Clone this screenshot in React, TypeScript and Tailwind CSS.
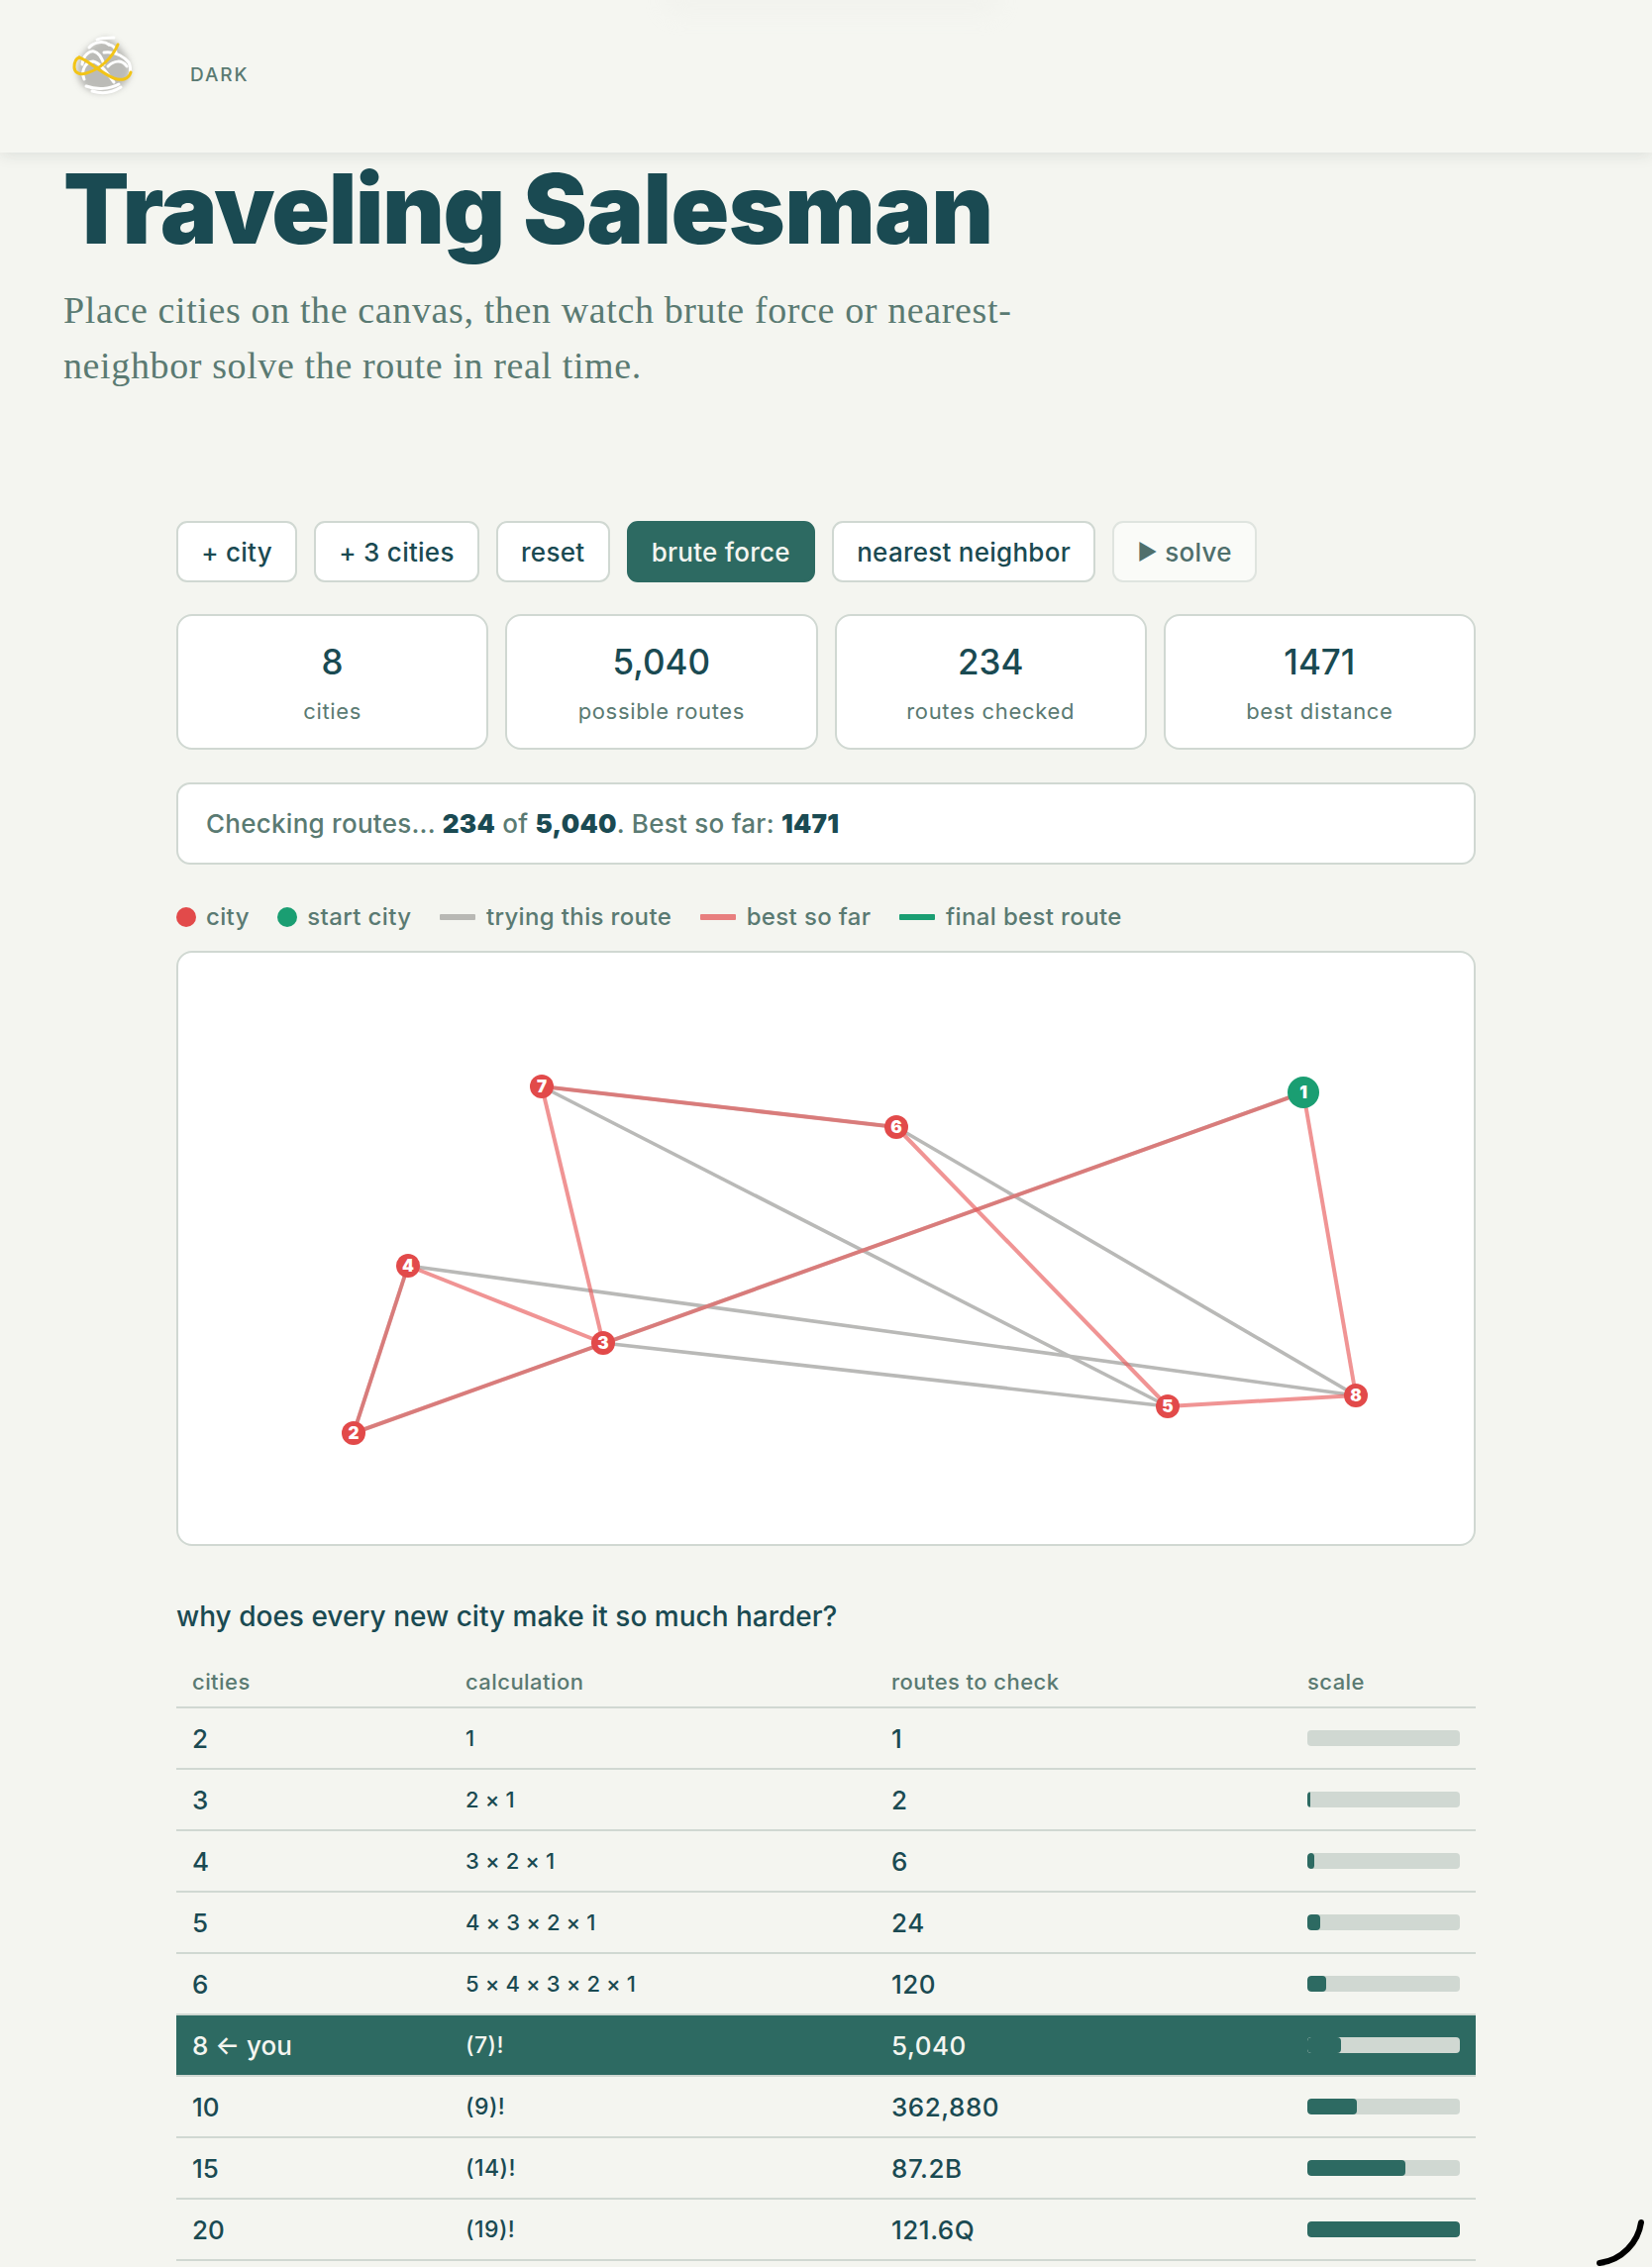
import React from "react";

const nodes: Record<number, [number, number]> = {
  1: [1316, 1103], 2: [357, 1447], 3: [609, 1356], 4: [412, 1278],
  5: [1179, 1420], 6: [905, 1138], 7: [547, 1097], 8: [1369, 1409],
};
const gray = [[4, 8], [8, 6], [6, 7], [7, 5], [5, 3], [1, 2], [2, 4]];
const red = [[1, 8], [8, 5], [5, 6], [6, 7], [7, 3], [3, 4], [4, 2], [2, 1]];
const OX = 178, OY = 960;

function Logo() {
  return (
    <svg width="80" height="80" viewBox="0 0 80 80" fill="none" strokeLinecap="round">
      <defs>
        <filter id="cone-blur" x="-40%" y="-40%" width="180%" height="180%">
          <feGaussianBlur stdDeviation="3" />
        </filter>
      </defs>
      <path d="M42 13C54 16 67 34 67 46C67 60 52 69 38 69C22 69 11 58 13 42C15 30 28 17 42 13Z" fill="#a8a8a4" opacity="0.75" filter="url(#cone-blur)" />
      <g stroke="#ffffff" strokeWidth="3">
        <path d="M33 15C37 13 42 13 50 13" />
        <path d="M25 23C30 17 40 16 45 20" />
        <path d="M45 20C50 21 52 24 52 28" />
        <path d="M18 40C19 30 26 26 30 27C35 28 38 34 40 40" />
        <path d="M20 55C16 46 22 37 29 37C36 38 44 50 50 58" />
        <path d="M40 28C52 26 62 34 65 38C67 42 67 46 66 50" />
        <path d="M44 42C50 36 58 35 63 42" />
        <path d="M22 62C33 66 46 65 55 60" />
        <path d="M28 67C38 70 48 69 57 63" />
      </g>
      <g stroke="#f2c417" strokeWidth="3">
        <path d="M54 20C48 34 36 45 22 49C15 51 10 48 10 43C10 38 12 34 15 33" />
        <path d="M15 33C24 36 36 48 50 54C58 57 65 55 67 48" />
      </g>
    </svg>
  );
}

function Btn({ children, active, muted }: { children: React.ReactNode; active?: boolean; muted?: boolean }) {
  const cls = active
    ? "bg-[#2d6a62] border-[#2d6a62] text-[#f4f5f0]"
    : muted
      ? "bg-[#fafbf8] border-[#dfe4df] text-[#4f6f6c]"
      : "bg-white border-[#d0d8d2] text-[#1a4a52]";
  return (
    <button className={`h-[62px] px-[23.2px] rounded-[11px] border-2 text-[26px] font-medium tracking-[0.01em] whitespace-nowrap ${cls}`}>
      {children}
    </button>
  );
}

function Stat({ value, label }: { value: string; label: string }) {
  return (
    <div className="h-[137px] bg-white border-2 border-[#d0d8d2] rounded-[16px] flex flex-col items-center justify-center gap-[15px] pt-[2px]">
      <div className="text-[35px] leading-[42px] font-medium text-[#1a4a52]">{value}</div>
      <div className="text-[22px] leading-[28px] tracking-[0.03em] text-[#5a7a72]">{label}</div>
    </div>
  );
}

function Legend({ kind, color, label }: { kind: "dot" | "line"; color: string; label: string }) {
  return (
    <div className="flex items-center gap-[10px]">
      {kind === "dot" ? (
        <span className="w-[20px] h-[20px] rounded-full" style={{ backgroundColor: color }} />
      ) : (
        <span className="w-[36px] h-[6px] rounded-[1px] mr-[1px]" style={{ backgroundColor: color }} />
      )}
      <span className="text-[24px] font-medium tracking-[0.015em] text-[#5a7a72]">{label}</span>
    </div>
  );
}

const rows: [string, string, string, number][] = [
  ["2", "1", "1", 0],
  ["3", "2 × 1", "2", 3],
  ["4", "3 × 2 × 1", "6", 7],
  ["5", "4 × 3 × 2 × 1", "24", 13],
  ["6", "5 × 4 × 3 × 2 × 1", "120", 19],
  ["8 ← you", "(7)!", "5,040", 34],
  ["10", "(9)!", "362,880", 50],
  ["15", "(14)!", "87.2B", 99],
  ["20", "(19)!", "121.6Q", 154],
];

export default function App() {
  return (
    <div className="relative w-[1668px] h-[2289px] overflow-hidden bg-[#f4f5f0] font-['Inter',sans-serif]">
      <header className="relative z-10 h-[154px] bg-[#f5f6f1] shadow-[0_3px_14px_rgba(30,50,50,0.10)] flex items-start pl-[65px] pt-[25px]">
        <Logo />
        <span className="ml-[47px] mt-[37px] text-[19px] leading-[28px] font-medium tracking-[0.1em] text-[#5a7a72]">DARK</span>
        <div className="absolute left-[670px] top-[-14px] w-[340px] h-[30px] rounded-full bg-[#e9eae5] blur-[10px] opacity-25" />
      </header>

      <section className="pl-[64px] pt-[3px]">
        <h1 className="text-[97px] leading-[108px] font-black text-[#1a4a52] whitespace-nowrap">
          <span className="tracking-[-0.0155em]">Traveling</span> <span className="tracking-[-0.0063em]">Salesman</span>
        </h1>
        <p className="mt-[20px] w-[1100px] text-[38px] leading-[56px] tracking-[0.62px] text-[#5a7a72] font-['Liberation_Serif',serif]">
          Place cities on the canvas, then watch brute force or nearest-<br />neighbor solve the route in real time.
        </p>
      </section>

      <main className="ml-[178px] w-[1312px] mt-[129px]">
        <div className="flex gap-[17px]">
          <Btn>+ city</Btn>
          <Btn>+ 3 cities</Btn>
          <Btn>reset</Btn>
          <Btn active>brute force</Btn>
          <Btn>nearest neighbor</Btn>
          <Btn muted><span className="text-[22px] align-[2px]">▶</span> solve</Btn>
        </div>

        <div className="grid grid-cols-4 gap-[17px] mt-[32px]">
          <Stat value="8" label="cities" />
          <Stat value="5,040" label="possible routes" />
          <Stat value="234" label="routes checked" />
          <Stat value="1471" label="best distance" />
        </div>

        <div className="mt-[33px] h-[83px] bg-white border-2 border-[#d0d8d2] rounded-[14px] flex items-center px-[28px] text-[26px] font-medium tracking-[0.01em] text-[#5a7a72]">
          <span>
            Checking routes... <b className="font-black text-[#1a4a52]">234</b> of <b className="font-black text-[#1a4a52]">5,040</b>. Best so far: <b className="font-black text-[#1a4a52]">1471</b>
          </span>
        </div>

        <div className="mt-[38px] h-[30px] flex items-center gap-[28.5px]">
          <Legend kind="dot" color="#e24a4a" label="city" />
          <Legend kind="dot" color="#1a9e72" label="start city" />
          <Legend kind="line" color="#b8b8b4" label="trying this route" />
          <Legend kind="line" color="#e87f7f" label="best so far" />
          <Legend kind="line" color="#1a9e72" label="final best route" />
        </div>

        <div className="mt-[19px] h-[601px] bg-white border-2 border-[#d0d8d2] rounded-[16px] overflow-hidden">
          <svg width="1312" height="601" viewBox="0 0 1312 601" className="-ml-[2px] -mt-[2px]">
            {gray.map(([a, b], i) => (
              <line key={i} x1={nodes[a][0] - OX} y1={nodes[a][1] - OY} x2={nodes[b][0] - OX} y2={nodes[b][1] - OY} stroke="#b9b9b7" strokeWidth="3.6" />
            ))}
            {red.map(([a, b], i) => (
              <line key={i} x1={nodes[a][0] - OX} y1={nodes[a][1] - OY} x2={nodes[b][0] - OX} y2={nodes[b][1] - OY} stroke="#e85a5a" strokeOpacity="0.65" strokeWidth="4" />
            ))}
            {Object.entries(nodes).map(([k, [x, y]]) => (
              <g key={k}>
                <circle cx={x - OX} cy={y - OY} r={k === "1" ? 16 : 12} fill={k === "1" ? "#1a9e72" : "#e24a4a"} />
                <text x={x - OX} y={y - OY + 6} textAnchor="middle" fontSize="17" fontWeight="900" fill="#ffffff" fontFamily="Inter, sans-serif">{k}</text>
              </g>
            ))}
          </svg>
        </div>

        <h2 className="mt-[53px] text-[28px] leading-[36px] font-medium text-[#1a4a52]">why does every new city make it so much harder?</h2>

        <table className="mt-[24px] w-[1312px] table-fixed border-collapse">
          <colgroup>
            <col className="w-[276px]" />
            <col className="w-[430px]" />
            <col className="w-[420px]" />
            <col className="w-[186px]" />
          </colgroup>
          <thead>
            <tr className="h-[50px] border-b-2 border-[#d0d8d2] text-left text-[22px] font-medium tracking-[0.02em] text-[#5a7a72]">
              <th className="px-[16px] font-medium">cities</th>
              <th className="px-[16px] font-medium">calculation</th>
              <th className="px-[16px] font-medium">routes to check</th>
              <th className="px-[16px] font-medium">scale</th>
            </tr>
          </thead>
          <tbody>
            {rows.map(([c, calc, n, w]) => {
              const you = c.includes("you");
              const fact = calc.includes("(");
              return (
                <tr key={c} className={`h-[62px] border-b-2 border-[#d0d8d2] ${you ? "bg-[#2d6a62] text-[#f4f5f0]" : "text-[#1a4a52]"}`}>
                  <td className="px-[16px] text-[26px] font-medium">{c}</td>
                  <td className={`px-[16px] font-medium ${fact ? "text-[23px] tracking-[0.02em]" : "text-[22px] tracking-[0.005em]"}`}>{calc}</td>
                  <td className="px-[16px] text-[26px] font-medium tracking-[0.02em]">{n}</td>
                  <td className="px-[16px]">
                    <div className="h-[16px] rounded-[4px] bg-[#d0d8d2] overflow-hidden">
                      <div className="h-full rounded-[4px] bg-[#2d6a62]" style={{ width: w }} />
                    </div>
                  </td>
                </tr>
              );
            })}
          </tbody>
        </table>
      </main>

      <svg className="absolute left-[1608px] top-[2238px]" width="56" height="51" viewBox="0 0 56 51" fill="none">
        <path d="M49 6C46 26 30 44 7 47" stroke="#000000" strokeWidth="6" strokeLinecap="round" />
      </svg>
    </div>
  );
}
